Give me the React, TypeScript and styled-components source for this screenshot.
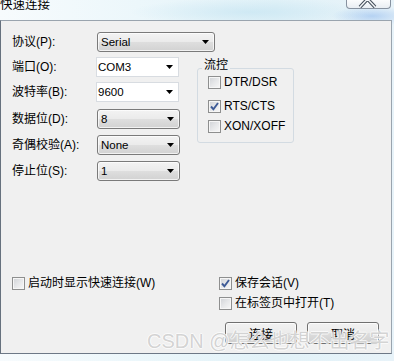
import React from 'react';
import styled, { createGlobalStyle } from 'styled-components';

const GlobalStyle = createGlobalStyle`
  html, body {
    margin: 0;
    padding: 0;
  }
  body {
    width: 394px;
    height: 361px;
    overflow: hidden;
    font-family: 'Liberation Sans', 'Noto Sans CJK SC', sans-serif;
    font-size: 12px;
    color: #000;
    background: #dbeaf3;
  }
`;

type ComboProps = {
  value: string;
  width: number;
  editable?: boolean;
};

const Combo = ({ value, width, editable }: ComboProps) => (
  <StyledCombo $width={width} $editable={editable}>
    <StyledComboValue>{value}</StyledComboValue>
    <svg width="7" height="4" viewBox="0 0 7 4">
      <polygon points="0,0 7,0 3.5,4" fill="#000" />
    </svg>
  </StyledCombo>
);

type CheckProps = {
  label: React.ReactNode;
  checked?: boolean;
};

const Check = ({ label, checked }: CheckProps) => (
  <StyledCheckRow>
    <StyledCheckBox>
      {checked && (
        <svg width="11" height="11" viewBox="0 0 11 11">
          <path
            d="M2 5.5 L4.4 8.2 L9 2"
            fill="none"
            stroke="#3d5a96"
            strokeWidth="1.9"
          />
        </svg>
      )}
    </StyledCheckBox>
    <span>{label}</span>
  </StyledCheckRow>
);

const fields = [
  { label: '端口(O):', value: 'COM3', editable: true, gap: 0 },
  { label: '波特率(B):', value: '9600', editable: true, gap: 5 },
  { label: '数据位(D):', value: '8', editable: false, gap: 7 },
  { label: '奇偶校验(A):', value: 'None', editable: false, gap: 6 },
  { label: '停止位(S):', value: '1', editable: false, gap: 6 },
];

const App = () => (
  <>
    <GlobalStyle />
    <StyledWindow>
      <StyledTitleBar>
        <StyledTitle>快速连接</StyledTitle>
        <StyledCloseButton>
          <svg width="45" height="8" viewBox="0 0 45 8">
            <path
              d="M13 7 L20.5 -1 L28 7"
              fill="none"
              stroke="#4b5561"
              strokeWidth="3.6"
            />
            <path
              d="M13 7 L20.5 -1 L28 7"
              fill="none"
              stroke="#f4f6f8"
              strokeWidth="1.4"
            />
          </svg>
        </StyledCloseButton>
      </StyledTitleBar>

      <StyledPanel>
        <StyledFieldRow $gap={0}>
          <StyledLabel>协议(P):</StyledLabel>
          <Combo value="Serial" width={118} />
        </StyledFieldRow>

        <StyledMiddle>
          <StyledFieldColumn>
            {fields.map((field) => (
              <StyledFieldRow key={field.label} $gap={field.gap}>
                <StyledLabel>{field.label}</StyledLabel>
                <Combo value={field.value} width={83} editable={field.editable} />
              </StyledFieldRow>
            ))}
          </StyledFieldColumn>

          <StyledGroup>
            <StyledLegend>流控</StyledLegend>
            <StyledGroupItem $gap={0}>
              <Check label="DTR/DSR" />
            </StyledGroupItem>
            <StyledGroupItem $gap={10}>
              <Check label="RTS/CTS" checked />
            </StyledGroupItem>
            <StyledGroupItem $gap={6}>
              <Check label="XON/XOFF" />
            </StyledGroupItem>
          </StyledGroup>
        </StyledMiddle>

        <StyledBottom>
          <StyledOptionLine>
            <StyledOptionCell>
              <Check label="启动时显示快速连接(W)" />
            </StyledOptionCell>
            <Check label="保存会话(V)" checked />
          </StyledOptionLine>
          <StyledOptionLine>
            <StyledOptionCell />
            <Check label="在标签页中打开(T)" />
          </StyledOptionLine>
          <StyledButtons>
            <StyledButton>连接</StyledButton>
            <StyledButton>取消</StyledButton>
          </StyledButtons>
        </StyledBottom>
      </StyledPanel>

      <StyledWatermark>CSDN @怎么也想不出名字</StyledWatermark>
    </StyledWindow>
  </>
);

const StyledWindow = styled.div`
  position: relative;
  width: 394px;
  height: 361px;
  display: flex;
  flex-direction: column;
  background:
    radial-gradient(ellipse 40px 10px at 372px 16px, rgba(120, 170, 235, 0.45), transparent),
    radial-gradient(ellipse 120px 14px at 250px 12px, rgba(190, 225, 240, 0.55), transparent),
    linear-gradient(90deg, #f7fbfd 0%, #ecf7fb 35%, #e2f2f8 70%, #e8f3f9 100%);
`;

const StyledTitleBar = styled.div`
  height: 20px;
  display: flex;
  align-items: flex-start;
  justify-content: space-between;
  padding-right: 3px;
`;

const StyledTitle = styled.div`
  font-family: 'Noto Sans CJK SC', sans-serif;
  font-size: 12.5px;
  line-height: 12px;
  margin-top: -2px;
  color: #000;
`;

const StyledCloseButton = styled.div`
  width: 45px;
  height: 9px;
  box-sizing: border-box;
  border: 1px solid #8792a0;
  border-top: none;
  border-radius: 0 0 4px 4px;
  background: linear-gradient(#fbfcfd, #e9eef3);
  overflow: hidden;
  svg {
    display: block;
  }
`;

const StyledPanel = styled.div`
  width: 392px;
  height: 334px;
  box-sizing: border-box;
  border: 1px solid #9aa4ae;
  border-left-color: #66717e;
  border-bottom-color: #6d7886;
  background: #f0f0f0;
  padding: 11px 12px 9px 11px;
  display: flex;
  flex-direction: column;
`;

const StyledMiddle = styled.div`
  display: flex;
  align-items: flex-start;
  margin-top: 5px;
`;

const StyledFieldColumn = styled.div`
  display: flex;
  flex-direction: column;
`;

const StyledFieldRow = styled.div<{ $gap: number }>`
  display: flex;
  align-items: center;
  height: 20px;
  margin-top: ${({ $gap }) => $gap}px;
`;

const StyledLabel = styled.div`
  width: 84px;
  white-space: nowrap;
  line-height: 14px;
`;

const StyledCombo = styled.div<{ $width: number; $editable?: boolean }>`
  width: ${({ $width }) => $width}px;
  height: 20px;
  box-sizing: border-box;
  display: flex;
  align-items: center;
  justify-content: space-between;
  padding: 0 5px 0 ${({ $editable }) => ($editable ? 1 : 3)}px;
  margin-left: ${({ $editable }) => ($editable ? 0 : 1)}px;
  font-size: 11.5px;
  border: 1px solid ${({ $editable }) => ($editable ? '#d8dce1' : '#7a7a7a')};
  border-radius: ${({ $editable }) => ($editable ? 0 : 3)}px;
  background: ${({ $editable }) =>
    $editable
      ? '#ffffff'
      : 'linear-gradient(#f3f3f3 0%, #ebebeb 48%, #dedede 52%, #d2d2d2 100%)'};
  box-shadow: ${({ $editable }) =>
    $editable ? 'none' : 'inset 0 0 0 1px rgba(255, 255, 255, 0.7)'};
  svg {
    display: block;
    flex-shrink: 0;
  }
`;

const StyledComboValue = styled.span`
  line-height: 14px;
`;

const StyledGroup = styled.fieldset`
  width: 97px;
  height: 82px;
  box-sizing: border-box;
  margin: 4px 0 0 17px;
  padding: 0 0 0 4px;
  border: 1px solid #d3dbe2;
  border-radius: 3px;
  min-width: 0;
`;

const StyledLegend = styled.legend`
  padding: 0 2px;
  font-size: 12px;
  line-height: 14px;
  position: relative;
  top: -3px;
`;

const StyledGroupItem = styled.div<{ $gap: number }>`
  margin: ${({ $gap }) => $gap}px 0 0 6px;
`;

const StyledCheckRow = styled.div`
  display: flex;
  align-items: center;
  gap: 3px;
  height: 14px;
  line-height: 14px;
  white-space: nowrap;
`;

const StyledCheckBox = styled.div`
  width: 13px;
  height: 13px;
  box-sizing: border-box;
  border: 1px solid #8e8f8f;
  background: linear-gradient(135deg, #cfd2d6 0%, #e6e7e9 50%, #f8f8f8 100%);
  box-shadow: inset 0 0 0 1px #f6f6f6;
  flex-shrink: 0;
  svg {
    display: block;
  }
`;

const StyledBottom = styled.div`
  margin-top: auto;
  display: flex;
  flex-direction: column;
`;

const StyledOptionLine = styled.div`
  display: flex;
  align-items: center;
  & + & {
    margin-top: 6px;
  }
`;

const StyledOptionCell = styled.div`
  width: 207px;
`;

const StyledButtons = styled.div`
  display: flex;
  justify-content: flex-end;
  gap: 10px;
  margin-top: 12px;
`;

const StyledButton = styled.div`
  width: 72px;
  height: 22px;
  box-sizing: border-box;
  display: flex;
  align-items: center;
  justify-content: center;
  border: 1px solid #707070;
  border-radius: 3px;
  background: linear-gradient(#f2f2f2 0%, #ebebeb 48%, #dddddd 52%, #cfcfcf 100%);
  box-shadow: inset 0 0 0 1px rgba(255, 255, 255, 0.75);
  font-size: 12px;
`;

const StyledWatermark = styled.div`
  position: absolute;
  left: 147px;
  top: 329px;
  font-size: 20px;
  line-height: 24px;
  white-space: nowrap;
  color: rgba(175, 175, 175, 0.55);
  text-shadow:
    1px 0 0 rgba(255, 255, 255, 0.7),
    -1px 0 0 rgba(255, 255, 255, 0.7),
    0 1px 0 rgba(255, 255, 255, 0.7),
    0 -1px 0 rgba(255, 255, 255, 0.7);
  pointer-events: none;
`;

export default App;
